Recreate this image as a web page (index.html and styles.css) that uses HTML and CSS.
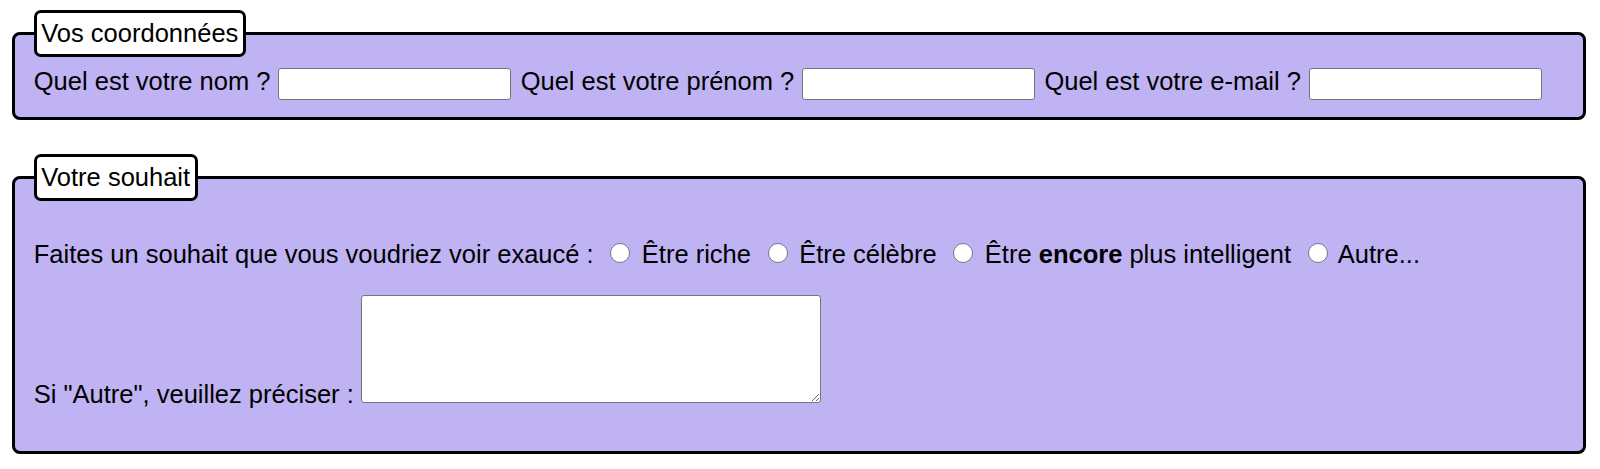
FILE: index.html
```html
<!DOCTYPE html>
<html lang="fr">
<head>
<meta charset="utf-8">
<title>Formulaire</title>
<link rel="stylesheet" href="styles.css">
</head>
<body>
<form class="form">
  <fieldset class="box box-first">
    <legend class="box-title">Vos coordonnées</legend>
    <label for="nom">Quel est votre nom ?</label> <input class="field" type="text" id="nom"> <label for="prenom">Quel est votre prénom ?</label> <input class="field" type="text" id="prenom"> <label for="email">Quel est votre e-mail ?</label> <input class="field" type="text" id="email">
  </fieldset>
  <fieldset class="box box-last">
    <legend class="box-title">Votre souhait</legend>
    <p class="row row-first">Faites un souhait que vous voudriez voir exaucé : <input class="radio" type="radio" name="souhait" id="riche"> <label for="riche">Être riche</label> <input class="radio" type="radio" name="souhait" id="celebre"> <label for="celebre">Être célèbre</label> <input class="radio" type="radio" name="souhait" id="intelligent"> <label for="intelligent">Être <strong>encore</strong> plus intelligent</label> <input class="radio" type="radio" name="souhait" id="autre"> <label for="autre">Autre...</label></p>
    <p class="row row-last"><label for="precisions">Si "Autre", veuillez préciser :</label> <textarea class="area" id="precisions"></textarea></p>
  </fieldset>
</form>
</body>
</html>
```

FILE: styles.css
```css
body {
  margin: 8px;
  font-family: "Liberation Sans", Arial, sans-serif;
  font-size: 25.5px;
  color: #000;
  background: #fff;
}

.form {
  margin: 0;
}

.box {
  margin: 2px 6px 34.5px 4px;
  padding: 10px 18.75px 17px;
  border: 3px solid #000;
  border-radius: 8px;
  background: #bfb3f3;
  min-width: 0;
}

.box-last {
  margin-bottom: 0;
}

.box-title {
  padding: 6px 4.5px;
  border: 3px solid #000;
  border-radius: 7px;
  background: #fff;
  line-height: normal;
}

.row {
  margin: 26px 0;
}

.row-first {
  margin-top: 27px;
}

.row-last {
  margin-bottom: 25px;
}

.field {
  box-sizing: border-box;
  width: 233px;
  height: 32px;
  margin: 0 2.5px 0 0.5px;
  padding: 1px 3px;
  border: 1.5px solid #767676;
  border-radius: 3px;
  background: #fff;
  font: 20px "Liberation Sans", Arial, sans-serif;
}

.radio {
  appearance: none;
  -webkit-appearance: none;
  box-sizing: border-box;
  width: 20px;
  height: 20px;
  margin: 4.5px 4.5px 0 9.5px;
  border: 1.5px solid #7a7a7a;
  border-radius: 50%;
  background: #fff;
  vertical-align: baseline;
}

.area {
  box-sizing: border-box;
  width: 460px;
  height: 108px;
  margin: 0;
  padding: 3px;
  border: 1.5px solid #767676;
  border-radius: 3px;
  background: #fff;
  font: 20px "Liberation Mono", monospace;
}
```
